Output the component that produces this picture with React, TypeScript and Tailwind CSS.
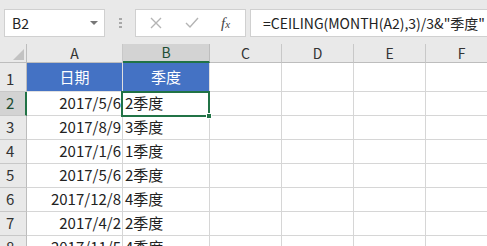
const rows = [
  { n: 2, date: "2017/5/6", q: "2季度" },
  { n: 3, date: "2017/8/9", q: "3季度" },
  { n: 4, date: "2017/1/6", q: "1季度" },
  { n: 5, date: "2017/5/6", q: "2季度" },
  { n: 6, date: "2017/12/8", q: "4季度" },
  { n: 7, date: "2017/4/2", q: "2季度" },
  { n: 8, date: "2017/11/5", q: "4季度" },
];

const font = { fontFamily: '"Noto Sans CJK SC", "Noto Sans", sans-serif' };

function App() {
  return (
    <div className="w-[487px] h-[246px] overflow-hidden bg-white text-[#222]" style={font}>
      {/* FORMULA BAR */}
      <div className="h-[44px] bg-[#e9e9e9] flex items-start pt-[9px] pl-[4px]">
        <div className="w-[101px] h-[28px] bg-white border border-[#d0d0d0] flex items-center justify-between pl-[7px] pr-[6px]">
          <span className="text-[14px]">B2</span>
          <span className="w-0 h-0 border-l-[4px] border-r-[4px] border-t-[4px] border-l-transparent border-r-transparent border-t-[#777]" />
        </div>
        <div className="w-[30px] h-[28px] flex flex-col items-center justify-center gap-[2px]">
          <span className="w-[3px] h-[2px] bg-[#a8a8a8]" />
          <span className="w-[3px] h-[2px] bg-[#a8a8a8]" />
          <span className="w-[3px] h-[2px] bg-[#a8a8a8]" />
        </div>
        <div className="w-[111px] h-[28px] bg-white border border-[#d0d0d0] flex items-center">
          <svg className="ml-[14px]" width="12" height="12" viewBox="0 0 12 12">
            <path d="M1 1 L11 11 M11 1 L1 11" stroke="#b4b4b4" strokeWidth="1.4" fill="none" />
          </svg>
          <svg className="ml-[23px]" width="14" height="12" viewBox="0 0 14 12">
            <path d="M1 6 L5 10 L13 1" stroke="#b4b4b4" strokeWidth="1.4" fill="none" />
          </svg>
          <span className="ml-[22px] text-[15px] italic text-[#444]" style={{ fontFamily: '"Liberation Serif", serif' }}>
            f<span className="text-[11px]">x</span>
          </span>
        </div>
        <div className="w-[4px]" />
        <div className="flex-1 h-[28px] bg-white border border-[#d0d0d0] border-r-0 flex items-center pl-[12px]">
          <span className="text-[14px] whitespace-nowrap">=CEILING(MONTH(A2),3)/3&amp;"季度"</span>
        </div>
      </div>

      {/* GRID */}
      <div className="grid grid-cols-[27px_96px_87px_72px_72px_72px_72px] grid-rows-[19px_29px_repeat(7,24px)]">
        {/* header row */}
        <div className="bg-[#e9e9e9] border-r border-b border-[#bdbdbd] flex items-end justify-end p-[2px]">
          <svg width="11" height="11" viewBox="0 0 11 11">
            <path d="M11 0 L11 11 L0 11 Z" fill="#c2c2c2" />
          </svg>
        </div>
        {["A", "B", "C", "D", "E", "F"].map((c) => (
          <div
            key={c}
            className={
              c === "B"
                ? "bg-[#d3d3d3] border-r border-[#bdbdbd] border-b-2 border-b-[#217346] flex items-center justify-center text-[14px] text-[#1e4e33]"
                : "bg-[#e9e9e9] border-r border-b border-[#c8c8c8] border-b-[#bdbdbd] flex items-center justify-center text-[14px] text-[#333]"
            }
          >
            {c}
          </div>
        ))}

        {/* row 1 */}
        <div className="bg-[#e9e9e9] border-r border-b border-[#c8c8c8] border-r-[#bdbdbd] flex items-end pl-[6px] pb-[1px] text-[15px] text-[#333]">1</div>
        <div className="bg-[#4472c4] border-r border-b border-[#e0e0e0] flex items-end justify-center pb-[3px] text-[15px] text-white">日期</div>
        <div className="bg-[#4472c4] border-r border-b border-[#e0e0e0] flex items-end justify-center pb-[3px] text-[15px] text-white">季度</div>
        {[0, 1, 2, 3].map((i) => (
          <div key={i} className="border-r border-b border-[#d6d6d6]" />
        ))}

        {rows.map((r) => (
          <Row key={r.n} {...r} />
        ))}
      </div>
    </div>
  );
}

function Row({ n, date, q }: { n: number; date: string; q: string }) {
  const sel = n === 2;
  return (
    <>
      <div
        className={
          sel
            ? "bg-[#d3d3d3] border-b border-[#c8c8c8] border-r-2 border-r-[#217346] flex items-end pl-[6px] pb-[1px] text-[15px] text-[#1e4e33]"
            : "bg-[#e9e9e9] border-r border-b border-[#c8c8c8] border-r-[#bdbdbd] flex items-end pl-[6px] pb-[1px] text-[15px] text-[#333]"
        }
      >
        {n}
      </div>
      <div className="border-r border-b border-[#d6d6d6] flex items-end justify-end pr-[1px] pb-[1px] text-[15px] whitespace-nowrap">{date}</div>
      <div className="relative border-r border-b border-[#d6d6d6] flex items-end pl-[2px] pb-[1px] text-[15px] whitespace-nowrap">
        {q}
        {sel && (
          <div className="absolute z-10 -left-[2px] -top-[1px] w-[89px] h-[26px] border-2 border-[#217346]">
            <div className="absolute -right-[4px] -bottom-[4px] w-[6px] h-[6px] bg-[#217346] border border-white" />
          </div>
        )}
      </div>
      {[0, 1, 2, 3].map((i) => (
        <div key={i} className="border-r border-b border-[#d6d6d6]" />
      ))}
    </>
  );
}

export default App;
